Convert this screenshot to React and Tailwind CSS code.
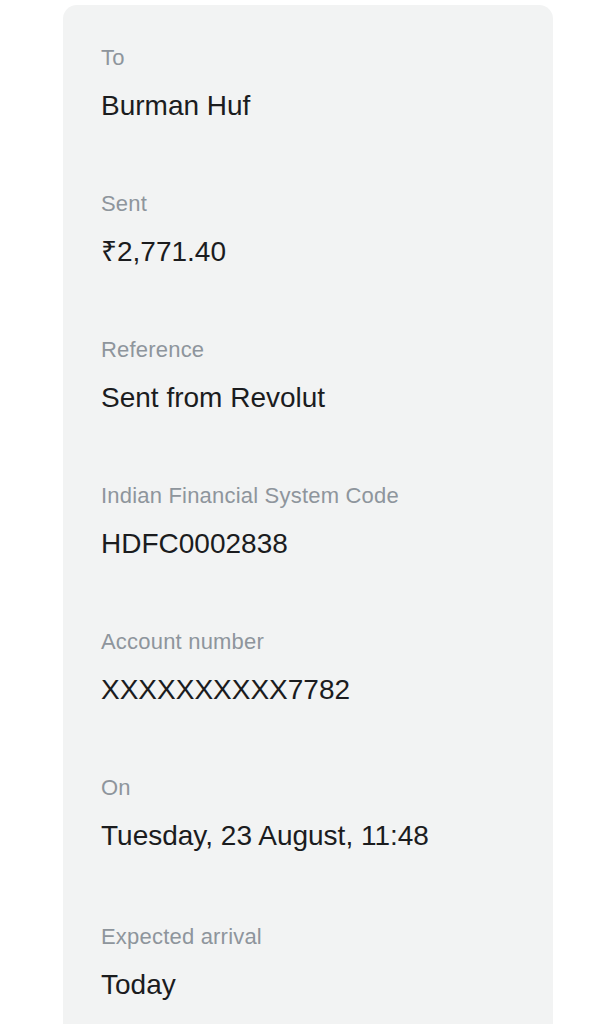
const rows = [
  { label: 'To', value: 'Burman Huf' },
  { label: 'Sent', value: '₹2,771.40' },
  { label: 'Reference', value: 'Sent from Revolut' },
  { label: 'Indian Financial System Code', value: 'HDFC0002838' },
  { label: 'Account number', value: 'XXXXXXXXXX7782' },
  { label: 'On', value: 'Tuesday, 23 August, 11:48' },
  { label: 'Expected arrival', value: 'Today' },
];

const App = () => {
  return (
    <div
      className="min-h-screen bg-white pt-[5px] pl-[63px]"
      style={{ fontFamily: '"Liberation Sans", Arial, sans-serif' }}
    >
      {/* Details card */}
      <div className="w-[490px] min-h-[1040px] bg-[#f2f3f3] rounded-t-[14px] pl-[38px] pt-[40px] flex flex-col">
        {rows.map((row, i) => (
          <div key={row.label} className={i === 0 ? '' : i === rows.length - 1 ? 'mt-[71px]' : 'mt-[68px]'}>
            <div className="text-[22px] leading-[26px] tracking-[0.2px] text-[#8e959c]">{row.label}</div>
            <div className="mt-[18px] text-[28px] leading-[34px] text-[#1b1c1e]">{row.value}</div>
          </div>
        ))}
      </div>
    </div>
  );
};

export default App;
